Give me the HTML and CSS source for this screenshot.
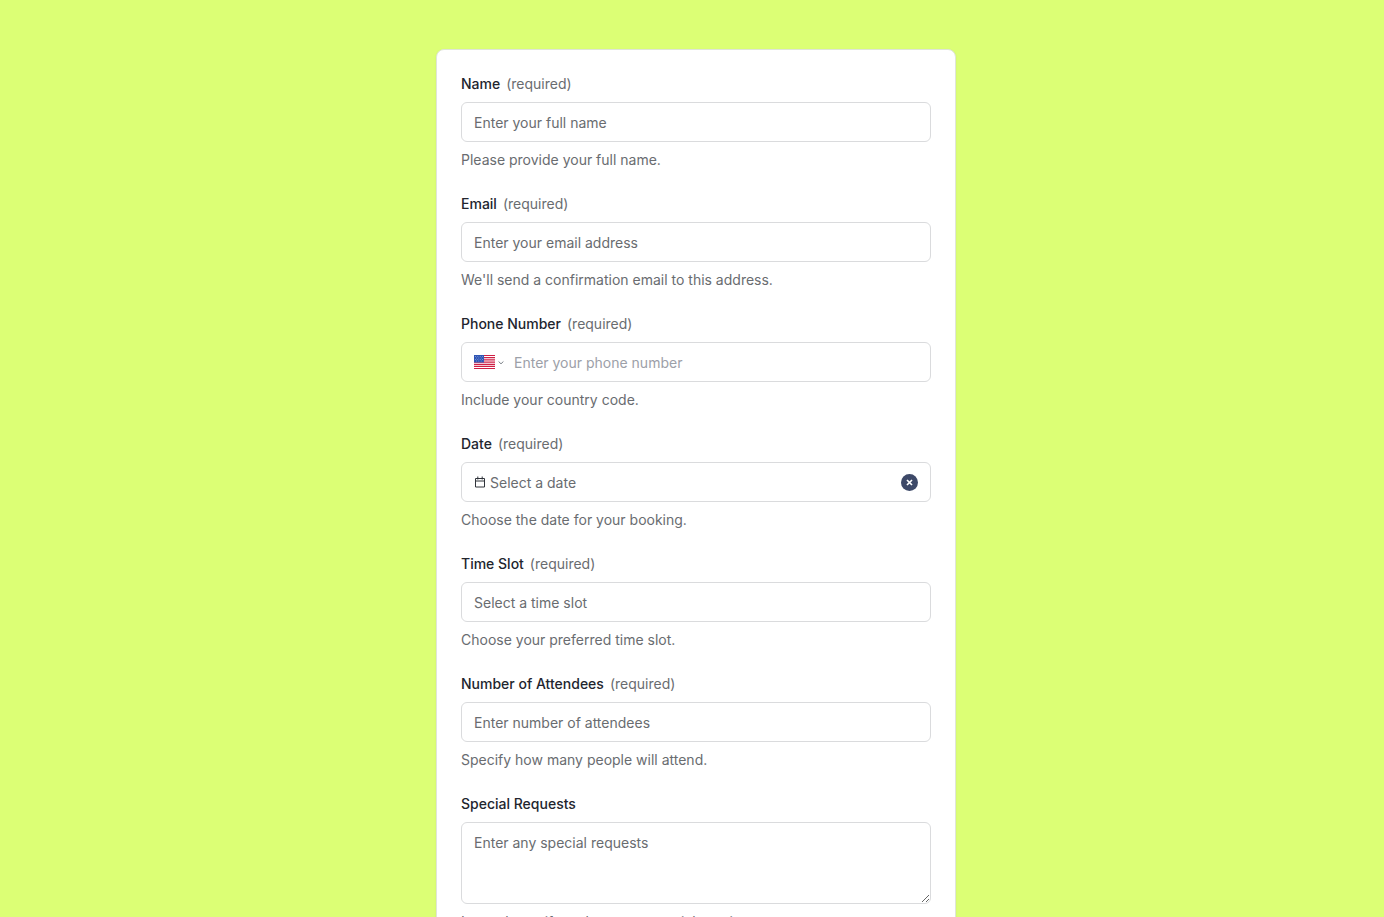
FILE: index.html
```html
<!DOCTYPE html>
<html lang="en">
<head>
<meta charset="utf-8">
<meta name="viewport" content="width=device-width, initial-scale=1">
<title>Booking form</title>
<link rel="stylesheet" href="styles.css">
</head>
<body class="page">
<form class="card">
  <div class="field">
    <label class="label" for="name">Name <span class="required">(required)</span></label>
    <input class="control" id="name" type="text" placeholder="Enter your full name">
    <p class="hint">Please provide your full name.</p>
  </div>
  <div class="field">
    <label class="label" for="email">Email <span class="required">(required)</span></label>
    <input class="control" id="email" type="email" placeholder="Enter your email address">
    <p class="hint">We'll send a confirmation email to this address.</p>
  </div>
  <div class="field">
    <label class="label" for="phone">Phone Number <span class="required">(required)</span></label>
    <div class="control group phone">
      <button class="country" type="button" aria-label="Country: United States">
        <svg class="flag" width="21" height="14" viewBox="0 0 21 14" aria-hidden="true">
          <path fill="#fff" d="M0 0h21v14H0z"/>
          <path stroke="#cf1f45" stroke-width="1.200" d="M0 .5h21M0 2.700h21M0 4.900h21M0 7.100h21M0 9.300h21M0 11.400h21M0 13.500h21"/>
          <path fill="#2f55b4" d="M0 0h10v7.500H0z"/>
          <path stroke="#a9bbe6" stroke-width=".7" stroke-dasharray=".8 1.600" d="M1 1.500h8.500M2 3h7.500M1 4.500h8.500M2 6h7.500"/>
        </svg>
        <svg class="chevron" width="6" height="5" viewBox="0 0 6 5" aria-hidden="true"><path fill="none" stroke="#7b8088" d="m.6 1.500 2.400 2.300 2.400-2.300"/></svg>
      </button>
      <input class="bare" id="phone" type="tel" placeholder="Enter your phone number">
    </div>
    <p class="hint">Include your country code.</p>
  </div>
  <div class="field">
    <label class="label" for="date">Date <span class="required">(required)</span></label>
    <div class="control group date">
      <svg class="calendar" width="12" height="12" viewBox="0 0 12 12" aria-hidden="true"><path fill="none" stroke="#30343b" d="M1.500 2.500h9v8.500h-9zM1.500 5h9M3.800.5v3M8.200.5v3"/></svg>
      <input class="bare" id="date" type="text" placeholder="Select a date">
      <button class="clear" type="button" aria-label="Clear date">
        <svg width="17" height="17" viewBox="0 0 17 17" aria-hidden="true"><circle cx="8.500" cy="8.500" r="8.500" fill="#3d4968"/><path stroke="#fff" stroke-width="1.700" d="m6 6 5 5m0-5-5 5"/></svg>
      </button>
    </div>
    <p class="hint">Choose the date for your booking.</p>
  </div>
  <div class="field">
    <label class="label" for="slot">Time Slot <span class="required">(required)</span></label>
    <select class="control slot" id="slot"><option>Select a time slot</option></select>
    <p class="hint">Choose your preferred time slot.</p>
  </div>
  <div class="field">
    <label class="label" for="attendees">Number of Attendees <span class="required">(required)</span></label>
    <input class="control" id="attendees" type="number" placeholder="Enter number of attendees">
    <p class="hint">Specify how many people will attend.</p>
  </div>
  <div class="field">
    <label class="label" for="requests">Special Requests</label>
    <textarea class="control area" id="requests" placeholder="Enter any special requests"></textarea>
    <p class="hint">Let us know if you have any special requirements.</p>
  </div>
</form>
</body>
</html>
```
FILE: styles.css
```css
* {
  box-sizing: border-box;
}

.page {
  margin: 0;
  padding: 49px 24px 48px 32px;
  background: #dcff75;
  font-family: Inter, "Liberation Sans", sans-serif;
  font-size: 14px;
  line-height: 20px;
  color: #696c70;
}

.card {
  display: flex;
  flex-direction: column;
  gap: 24px;
  max-width: 520px;
  margin: 0 auto;
  padding: 24px;
  background: #fff;
  border: 1px solid #dfe5d8;
  border-radius: 8px;
  box-shadow: 0 1px 3px rgb(0 0 0 / 5%);
}

.field {
  display: flex;
  flex-direction: column;
  gap: 8px;
}

.label {
  display: flex;
  gap: 6px;
  font-weight: 500;
  color: #22252e;
}

.required {
  font-weight: 400;
  color: #696c70;
}

.hint {
  margin: 0;
}

.control {
  width: 100%;
  height: 40px;
  margin: 0;
  padding: 0 12px;
  background: #fff;
  border: 1px solid #dadbdd;
  border-radius: 6px;
  font: inherit;
  color: #696c70;
  appearance: none;
}

.control::placeholder,
.bare::placeholder {
  color: #696c70;
  opacity: 1;
}

.slot {
  padding-top: 2px;
}

.area {
  display: block;
  height: 82px;
  padding: 10px 12px;
  resize: vertical;
}

.group {
  display: flex;
  align-items: center;
}

.bare {
  flex: 1;
  min-width: 0;
  height: 100%;
  padding: 0;
  border: 0;
  outline: 0;
  background: transparent;
  font: inherit;
}

.country,
.clear {
  display: flex;
  align-items: center;
  padding: 0;
  border: 0;
  background: transparent;
}

.country {
  gap: 3px;
}

.phone {
  gap: 10px;
}

.phone .bare::placeholder {
  color: #9ca0a8;
}

.date {
  gap: 4px;
}
```
